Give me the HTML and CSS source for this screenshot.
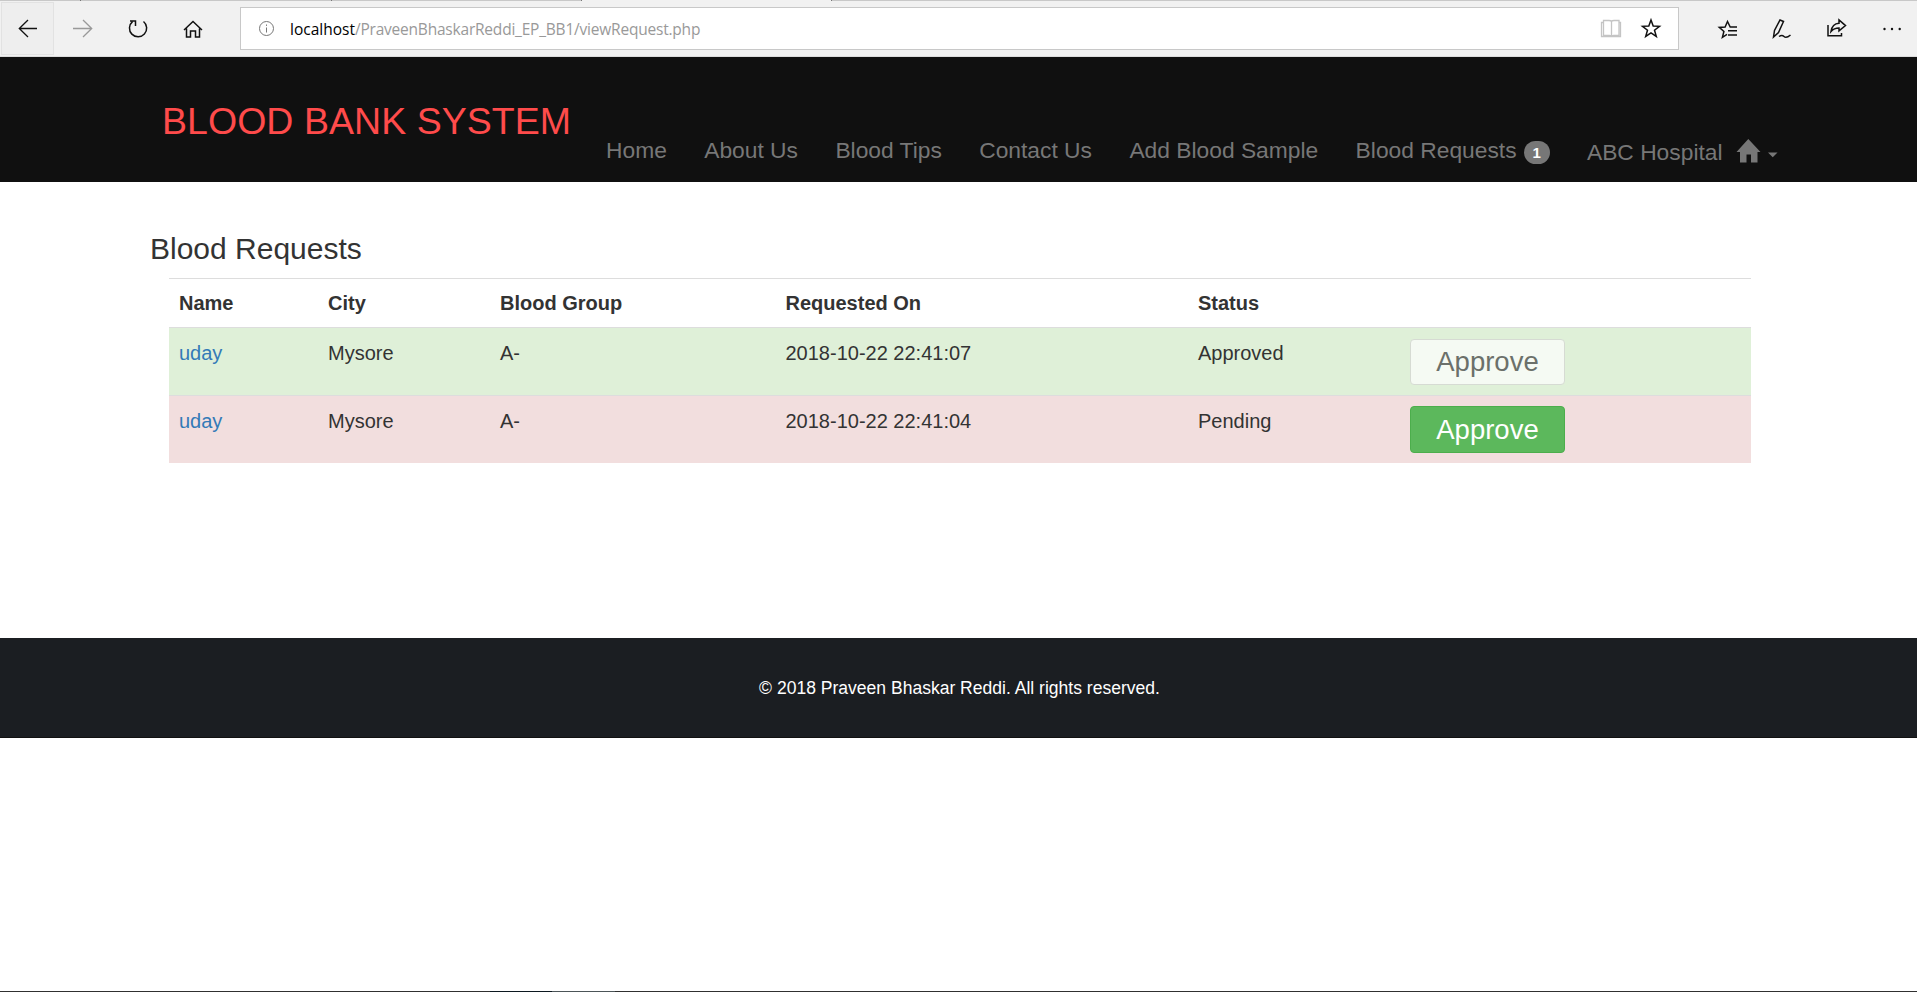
FILE: index.html
```html
<!DOCTYPE html>
<html lang="en">
<head>
<meta charset="utf-8">
<title>Blood Bank System</title>
<link rel="stylesheet" href="styles.css">
</head>
<body>
<div class="browser">
  <div class="tabs"><i class="tab-a"></i><i class="tab-b"></i><i class="tab-c"></i><i class="tab-active"></i><i class="tab-rest"></i></div>
  <div class="tools">
    <svg class="controls" width="240" height="55" viewBox="0 2 240 55" fill="none" stroke="#111" stroke-width="1.3">
      <rect x="1.5" y="2.5" width="52" height="52" fill="#eeeeee" stroke="#e2e2e2" stroke-width="1"/>
      <path d="M37 28.5H19M28 20L19.300 28.500 28 37"/>
      <path stroke="#999" d="M73 28.500h18.500M83 20l8.700 8.500L83 37"/>
      <path stroke-width="1.500" d="M143.500 21.500A8.600 8.600 0 1 1 132.500 21.600M130 21h5.500v5"/>
      <path stroke-width="1.500" d="M184 30l9-8.500 9 8.500M186.500 28.500V37h4v-6h5v6h4v-8.500"/>
    </svg>
    <div class="address">
      <svg width="49" height="41" viewBox="241 8 49 41" fill="none" stroke="#777"><circle cx="266.500" cy="28.500" r="7"/><path d="M266.500 27.500v5M266.500 24.500v1.400"/></svg>
      <span class="host">localhost</span><span class="path">/PraveenBhaskarReddi_EP_BB1/viewRequest.php</span>
      <svg class="marks" width="80" height="41" viewBox="1598 8 80 41" fill="none" stroke="#c4c4c4" stroke-width="1.300">
        <path d="M1603.500 20.500h5.500c2 0 2.500 1 2.500 1s.5-1 2.500-1h5v15h-5.500c-2 0-2 1-2 1s0-1-2-1h-6zM1611.500 21.500v15M1603.500 22.500h-2v14h19v-14h-1.500"/>
        <path stroke="#111" stroke-width="1.500" d="M1651 20l2.200 6 6.300.3-5 3.900 1.800 6.200-5.300-3.500-5.300 3.500 1.800-6.200-5-3.900 6.300-.3z"/>
      </svg>
    </div>
    <svg width="238" height="55" viewBox="1679 2 238 55" fill="none" stroke="#111" stroke-width="1.500">
      <path d="M1737 27h-6.800l-2.700-5.500-2.400 5.500-5.800.4 4.600 4-1.500 6 4.600-3M1728 30.800h9M1728 35h9"/>
      <path d="M1773.500 37l1-6.500 5.500-10.500 3.500 1.500-5 11zl5-4.500M1779 36.500c3-2 4-1 5 0s3 1.500 6.500-1.500"/>
      <path d="M1828 25v10.800h13.500V33M1831 31.500c.8-5 4-8 8-8.200v-3.300l6.500 5.600-6.500 5.300V28c-4 0-6 1.200-8 3.500z"/>
      <g fill="#111" stroke="none"><circle cx="1884.500" cy="29" r="1.200"/><circle cx="1892" cy="29" r="1.200"/><circle cx="1899.700" cy="29" r="1.200"/></g>
    </svg>
  </div>
</div>
<header class="site-header">
  <a class="brand">BLOOD BANK SYSTEM</a>
  <nav class="nav">
    <a>Home</a><a>About Us</a><a>Blood Tips</a><a>Contact Us</a><a>Add Blood Sample</a>
    <a class="requests">Blood Requests<span class="badge">1</span></a>
    <a class="account">ABC Hospital<svg width="42" height="24" viewBox="0 0 42 24" fill="#777"><path d="M12.300 0L24.500 13H21.500V23.500H15V15.500H10.500V23.500H4V13H.5zM32 13.500h9.500l-4.750 4.750z"/></svg></a>
  </nav>
</header>
<main class="content">
  <h3 class="title">Blood Requests</h3>
  <table class="table">
    <colgroup><col class="c-name"><col class="c-city"><col class="c-group"><col class="c-date"><col class="c-status"><col></colgroup>
    <thead><tr><th>Name</th><th>City</th><th>Blood Group</th><th>Requested On</th><th>Status</th><th></th></tr></thead>
    <tbody>
      <tr class="success"><td><a>uday</a></td><td>Mysore</td><td>A-</td><td>2018-10-22 22:41:07</td><td>Approved</td><td><button class="btn btn-off">Approve</button></td></tr>
      <tr class="danger"><td><a>uday</a></td><td>Mysore</td><td>A-</td><td>2018-10-22 22:41:04</td><td>Pending</td><td><button class="btn btn-go">Approve</button></td></tr>
    </tbody>
  </table>
</main>
<footer class="footer">© 2018 Praveen Bhaskar Reddi. All rights reserved.</footer>
<div class="taskbar"><i></i></div>
</body>
</html>
```
FILE: styles.css
```css
* { box-sizing: border-box; }
body {
  margin: 0;
  height: 992px;
  display: flex;
  flex-direction: column;
  overflow: hidden;
  background: #fff;
  color: #333;
  font-family: "Liberation Sans", Arial, sans-serif;
  font-size: 20px;
}
.browser { height: 57px; background: #f1f1f1; border-bottom: 1px solid #dcdcdc; }
.tabs { display: flex; height: 1px; background: #c8c8c8; }
.tabs i { height: 1px; border-right: 1px solid #777; }
.tab-a { width: 81px; }
.tab-b { width: 251px; }
.tab-c { width: 250px; }
.tab-active { width: 250px; background: #f1f1f1; }
.tabs .tab-rest { flex: 1; border: 0; }
.tools { display: flex; height: 55px; margin-top: 1px; }
.tools svg { flex: none; display: block; }
.address {
  display: flex;
  width: 1439px;
  height: 43px;
  margin-top: 5px;
  border: 1px solid #c8c8c8;
  background: #fff;
  font-family: "Open Sans", "Noto Sans", sans-serif;
  font-size: 15.5px;
  line-height: 43px;
  white-space: nowrap;
}
.host { color: #000; }
.path { color: #999; letter-spacing: -0.21px; }
.marks { margin-left: auto; }

.site-header { display: flex; height: 125px; background: #101010; }
.brand { width: 444px; margin-left: 162px; padding-top: 43px; font-size: 37.5px; line-height: 43px; color: #ff4b4b; white-space: nowrap; letter-spacing: 0.04px; }
.nav { display: flex; gap: 37.4px; padding-top: 80px; font-size: 22.8px; line-height: 26px; color: #777; white-space: nowrap; }
.requests { display: flex; }
.badge { width: 26px; height: 23px; margin: 4px 0 0 7px; border-radius: 12px; background: #777; color: #fff; font-size: 15px; font-weight: bold; line-height: 23px; text-align: center; }
.account { display: flex; padding-top: 2px; }
.account svg { margin: 0 0 0 13px; }

.content { height: 456px; padding: 50px 166px 0 150px; }
.title { margin: 0; font-size: 30px; font-weight: normal; line-height: 33px; }
.table { width: 1582px; margin: 13px 0 0 19px; border-collapse: separate; border-spacing: 0; table-layout: fixed; }
.c-name { width: 149px; }
.c-city { width: 172px; }
.c-group { width: 285.5px; }
.c-date { width: 412.5px; }
.c-status { width: 212px; }
.table th, .table td { height: 68px; padding: 11px 10px 0; border-top: 1px solid #ddd; line-height: 28px; text-align: left; vertical-align: top; }
.table th { height: 49px; padding-top: 10px; }
.table td a { color: #337ab7; }
.success { background: #dff0d8; }
.danger { background: #f2dede; }
.btn { display: block; width: 155px; height: 46px; padding: 0; border: 1px solid; border-radius: 4px; font: 27.5px/42px "Liberation Sans", Arial, sans-serif; }
.btn-off { border-color: #d6dbd3; background: #f5faf3; color: #6b706a; }
.btn-go { height: 47px; margin-top: -1px; border-color: #4cae4c; background: #5cb85c; color: #fff; }

.footer { height: 100px; padding-left: 2px; background: #1b1e22; border-bottom: 1px solid #111; color: #fff; font-size: 17.55px; line-height: 100px; text-align: center; }
.taskbar { display: flex; height: 1px; margin-top: auto; background: #303030; }
.taskbar i { width: 125px; margin-left: 490px; background: linear-gradient(90deg, #0c1820 50%, #4c5558 50%); }
```
